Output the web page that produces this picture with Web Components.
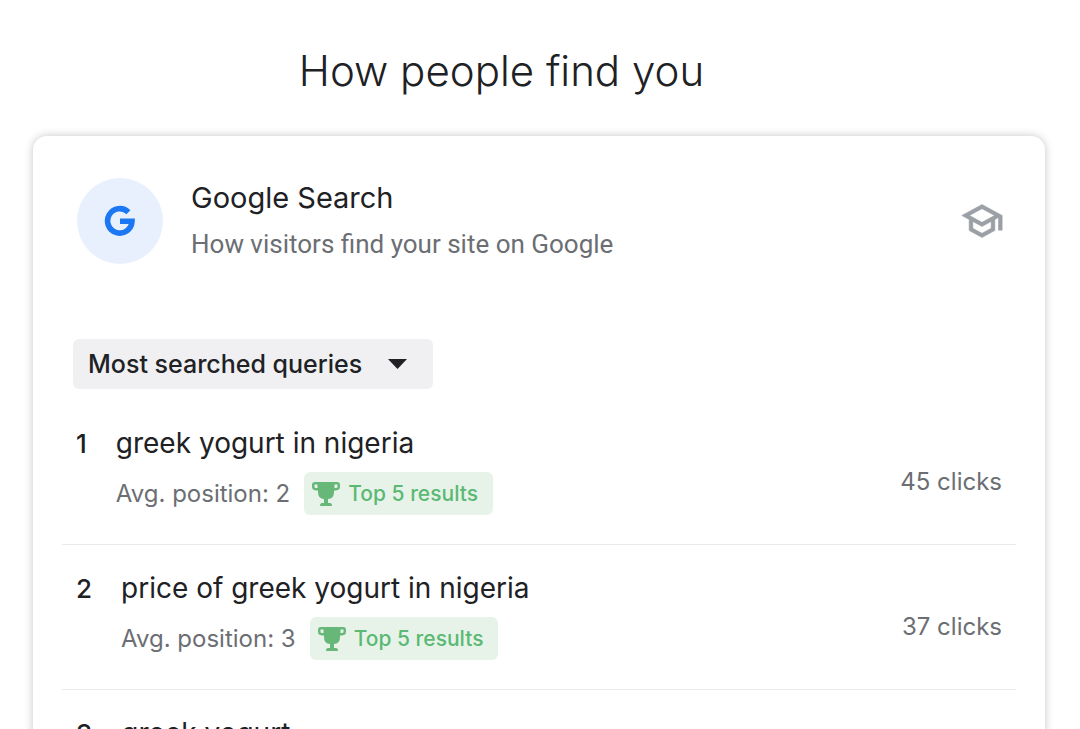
<!DOCTYPE html>
<html lang="en">
<head>
<meta charset="utf-8">
<meta name="viewport" content="width=device-width, initial-scale=1">
<title>How people find you</title>
<style>
  html, body { margin: 0; height: 100%; overflow: hidden; background: #fff; }
  body { font-family: "Inter", "Liberation Sans", sans-serif; color: #202124; }
</style>
</head>
<body>
<insights-page>
  <span slot="heading">How people find you</span>
  <insights-card>
    <span slot="title">Google Search</span>
    <span slot="subtitle">How visitors find your site on Google</span>
    <query-filter slot="filter"></query-filter>
    <query-row rank="1" position="2" clicks="45">greek yogurt in nigeria</query-row>
    <query-row rank="2" position="3" clicks="37">price of greek yogurt in nigeria</query-row>
    <query-row rank="3">greek yogurt</query-row>
  </insights-card>
</insights-page>

<template id="page-template">
  <style>
    :host { display: block; height: 100vh; overflow: hidden; }
    h1 { margin: 0; padding: 43px 77px 37px 0; font-size: 42px; line-height: 56px; font-weight: 300; text-align: center; }
    main { padding: 0 35px 0 33px; }
  </style>
  <h1><slot name="heading"></slot></h1>
  <main><slot></slot></main>
</template>

<template id="card-template">
  <style>
    :host { display: block; border-radius: 14px; background: #fff; box-shadow: 0 0 8px rgba(60, 64, 67, .3); }
    header { display: flex; align-items: center; padding: 39px 41px 0 44px; }
    .logo { flex: none; display: grid; place-items: center; width: 86px; height: 86px; border-radius: 50%; background: #e8f0fe; }
    .text { flex: 1; margin-left: 28px; }
    h2 { margin: 0; font-size: 29px; line-height: 46px; font-weight: 400; }
    p { margin: 0; font: 26px/46px Roboto, sans-serif; color: #6b6e73; }
    .learn { display: block; padding: 0; border: 0; background: none; color: #9aa0a6; }
    svg { display: block; }
    .filter { padding: 72px 40px 11px; }
    .rows { padding: 0 29px; }
  </style>
  <header>
    <div class="logo">
      <svg width="32" height="32" viewBox="0 0 32 32" fill="none" stroke="#1c78f2" stroke-width="5.600" aria-hidden="true">
        <path d="M24.400 7.200A12.200 12.200 0 1 0 28 16.200H16"/>
      </svg>
    </div>
    <div class="text">
      <h2><slot name="title"></slot></h2>
      <p><slot name="subtitle"></slot></p>
    </div>
    <button class="learn" type="button" aria-label="Learn more">
      <svg width="44" height="44" viewBox="0 0 24 24" fill="currentColor" stroke="currentColor" stroke-width=".3"><path d="M12 3 1 9l4 2.180v6L12 21l7-3.820v-6l2-1.090V17h2V9L12 3zm6.820 6L12 12.720 5.180 9 12 5.280 18.820 9zM17 15.990l-5 2.730-5-2.730v-3.720L12 15l5-2.730v3.720z"/></svg>
    </button>
  </header>
  <div class="filter"><slot name="filter"></slot></div>
  <div class="rows" role="list"><slot></slot></div>
</template>

<template id="filter-template">
  <style>
    :host { display: block; }
    .box { display: grid; width: 360px; max-width: 100%; align-items: center; }
    select, svg { grid-area: 1 / 1; }
    select { appearance: none; width: 100%; height: 50px; margin: 0; padding: 0 56px 0 15px; border: 0; border-radius: 6px; background: #f0f0f2; color: #202124; font: 500 25px "Inter", sans-serif; }
    svg { justify-self: end; margin-right: 26px; pointer-events: none; }
  </style>
  <div class="box">
    <select aria-label="Query list"><option>Most searched queries</option></select>
    <svg width="19" height="10" viewBox="0 0 19 10" aria-hidden="true"><path d="M0 0h19L9.500 10z" fill="#202124"/></svg>
  </div>
</template>

<template id="row-template">
  <style>
    :host { display: flex; height: 144px; border-bottom: 1px solid #e8eaed; }
    .rank { padding: 26px 29px 0 14px; font-size: 26px; line-height: 36px; font-weight: 500; }
    .main { flex: 1; padding-top: 24px; }
    h3 { margin: 0; font-size: 28px; line-height: 38px; font-weight: 400; }
    .meta { display: flex; align-items: center; margin-top: 10px; font-size: 24px; color: #6b6e73; }
    .badge { display: flex; align-items: center; height: 43px; margin-left: 14px; padding: 0 15px 0 8px; border-radius: 6px; background: #e7f3e9; color: #5bb974; font-size: 21px; font-weight: 500; }
    .badge svg { margin-right: 8px; }
    .clicks { padding: 64px 14px 0 0; font-size: 24px; line-height: 36px; color: #6b6e73; }
    [hidden] { display: none; }
  </style>
  <div class="rank"></div>
  <div class="main">
    <h3><slot></slot></h3>
    <div class="meta">
      <span class="position"></span>
      <span class="badge">
        <svg width="28" height="26" viewBox="0 0 28 26" fill="#67b779" aria-hidden="true"><path fill-rule="evenodd" d="M3 1H25Q28 1 28 4V6Q28 9 24 9.500H22V11Q22 18 16 18V22H18Q20 22 20 25H8Q8 22 10 22H12V18Q6 18 6 11V9.500H4Q0 9 0 6V4Q0 1 3 1ZM2.500 3.500V6Q2.500 7 4 7H5.500V3.500ZM22.500 3.500V7H24Q25.500 7 25.500 6V3.500Z"/></svg>
        <span>Top 5 results</span>
      </span>
    </div>
  </div>
  <div class="clicks"></div>
</template>

<script>
  class TemplateElement extends HTMLElement {
    constructor() {
      super();
      const template = document.getElementById(this.constructor.template);
      this.attachShadow({ mode: "open" }).append(template.content.cloneNode(true));
    }
  }
  class InsightsPage extends TemplateElement { static template = "page-template"; }
  class InsightsCard extends TemplateElement { static template = "card-template"; }
  class QueryFilter extends TemplateElement { static template = "filter-template"; }
  class QueryRow extends TemplateElement {
    static template = "row-template";
    connectedCallback() {
      const find = (s) => this.shadowRoot.querySelector(s);
      this.setAttribute("role", "listitem");
      find(".rank").textContent = this.getAttribute("rank");
      if (this.hasAttribute("position")) {
        find(".position").textContent = `Avg. position: ${this.getAttribute("position")}`;
        find(".clicks").textContent = `${this.getAttribute("clicks")} clicks`;
      } else {
        find(".meta").hidden = true;
      }
    }
  }
  customElements.define("insights-page", InsightsPage);
  customElements.define("insights-card", InsightsCard);
  customElements.define("query-filter", QueryFilter);
  customElements.define("query-row", QueryRow);
</script>
</body>
</html>
